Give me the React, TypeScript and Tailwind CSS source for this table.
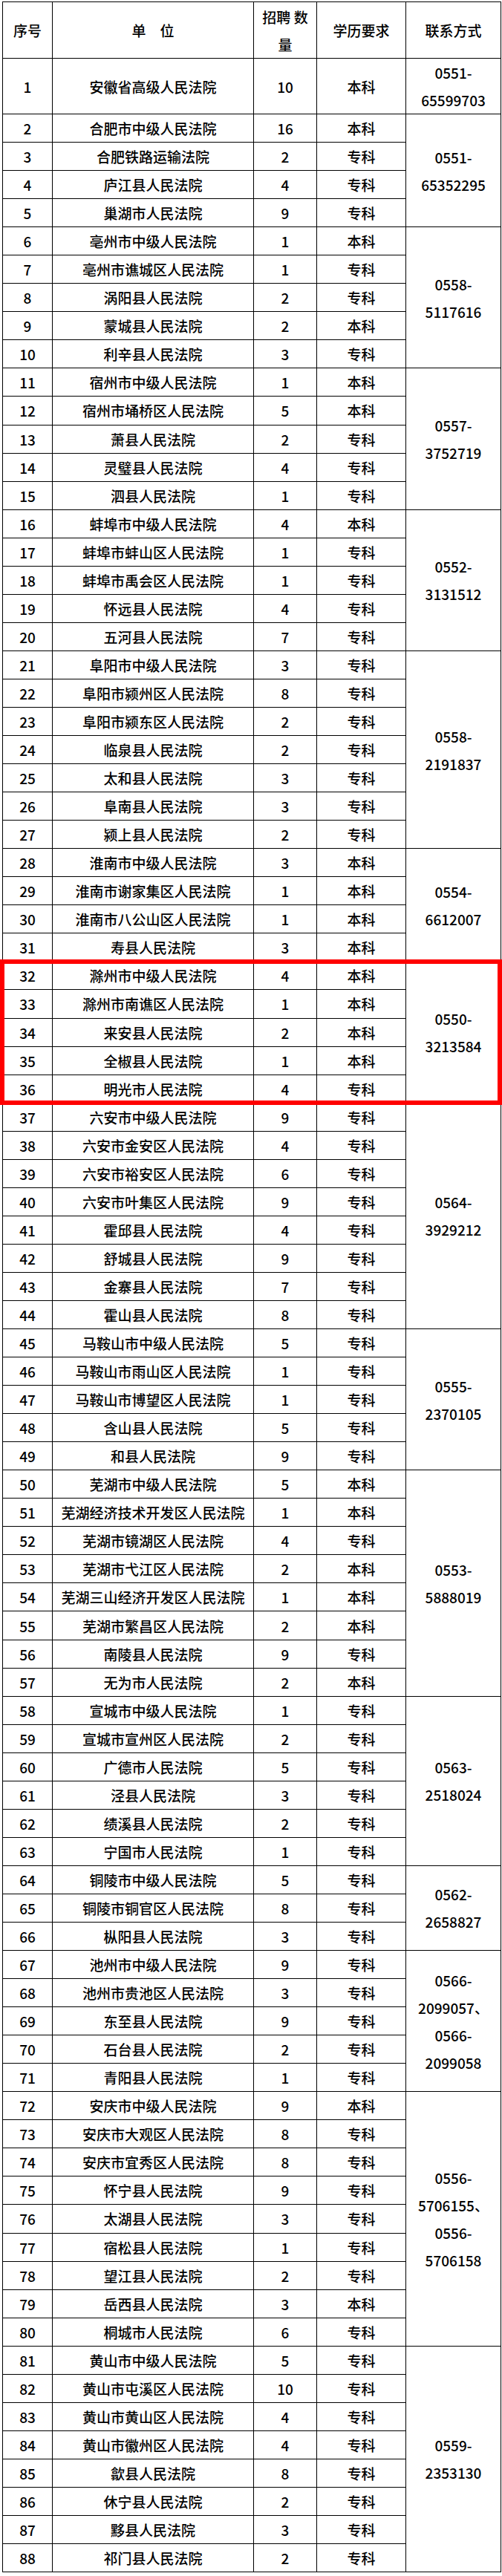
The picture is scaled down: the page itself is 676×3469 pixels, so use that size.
type Row = [number, string, number, string];

const groups: { phone: string; rows: Row[] }[] = [
  { phone: "0551-65599703", rows: [[1, "安徽省高级人民法院", 10, "本科"]] },
  {
    phone: "0551-65352295",
    rows: [
      [2, "合肥市中级人民法院", 16, "本科"],
      [3, "合肥铁路运输法院", 2, "专科"],
      [4, "庐江县人民法院", 4, "专科"],
      [5, "巢湖市人民法院", 9, "专科"],
    ],
  },
  {
    phone: "0558-5117616",
    rows: [
      [6, "亳州市中级人民法院", 1, "本科"],
      [7, "亳州市谯城区人民法院", 1, "专科"],
      [8, "涡阳县人民法院", 2, "专科"],
      [9, "蒙城县人民法院", 2, "本科"],
      [10, "利辛县人民法院", 3, "专科"],
    ],
  },
  {
    phone: "0557-3752719",
    rows: [
      [11, "宿州市中级人民法院", 1, "本科"],
      [12, "宿州市埇桥区人民法院", 5, "本科"],
      [13, "萧县人民法院", 2, "专科"],
      [14, "灵璧县人民法院", 4, "专科"],
      [15, "泗县人民法院", 1, "专科"],
    ],
  },
  {
    phone: "0552-3131512",
    rows: [
      [16, "蚌埠市中级人民法院", 4, "本科"],
      [17, "蚌埠市蚌山区人民法院", 1, "专科"],
      [18, "蚌埠市禹会区人民法院", 1, "专科"],
      [19, "怀远县人民法院", 4, "专科"],
      [20, "五河县人民法院", 7, "专科"],
    ],
  },
  {
    phone: "0558-2191837",
    rows: [
      [21, "阜阳市中级人民法院", 3, "专科"],
      [22, "阜阳市颍州区人民法院", 8, "专科"],
      [23, "阜阳市颍东区人民法院", 2, "专科"],
      [24, "临泉县人民法院", 2, "专科"],
      [25, "太和县人民法院", 3, "专科"],
      [26, "阜南县人民法院", 3, "专科"],
      [27, "颍上县人民法院", 2, "专科"],
    ],
  },
  {
    phone: "0554-6612007",
    rows: [
      [28, "淮南市中级人民法院", 3, "本科"],
      [29, "淮南市谢家集区人民法院", 1, "本科"],
      [30, "淮南市八公山区人民法院", 1, "本科"],
      [31, "寿县人民法院", 3, "本科"],
    ],
  },
  {
    phone: "0550-3213584",
    rows: [
      [32, "滁州市中级人民法院", 4, "本科"],
      [33, "滁州市南谯区人民法院", 1, "本科"],
      [34, "来安县人民法院", 2, "本科"],
      [35, "全椒县人民法院", 1, "本科"],
      [36, "明光市人民法院", 4, "专科"],
    ],
  },
  {
    phone: "0564-3929212",
    rows: [
      [37, "六安市中级人民法院", 9, "专科"],
      [38, "六安市金安区人民法院", 4, "专科"],
      [39, "六安市裕安区人民法院", 6, "专科"],
      [40, "六安市叶集区人民法院", 9, "专科"],
      [41, "霍邱县人民法院", 4, "专科"],
      [42, "舒城县人民法院", 9, "专科"],
      [43, "金寨县人民法院", 7, "专科"],
      [44, "霍山县人民法院", 8, "专科"],
    ],
  },
  {
    phone: "0555-2370105",
    rows: [
      [45, "马鞍山市中级人民法院", 5, "专科"],
      [46, "马鞍山市雨山区人民法院", 1, "专科"],
      [47, "马鞍山市博望区人民法院", 1, "专科"],
      [48, "含山县人民法院", 5, "专科"],
      [49, "和县人民法院", 9, "专科"],
    ],
  },
  {
    phone: "0553-5888019",
    rows: [
      [50, "芜湖市中级人民法院", 5, "本科"],
      [51, "芜湖经济技术开发区人民法院", 1, "本科"],
      [52, "芜湖市镜湖区人民法院", 4, "专科"],
      [53, "芜湖市弋江区人民法院", 2, "本科"],
      [54, "芜湖三山经济开发区人民法院", 1, "本科"],
      [55, "芜湖市繁昌区人民法院", 2, "本科"],
      [56, "南陵县人民法院", 9, "专科"],
      [57, "无为市人民法院", 2, "本科"],
    ],
  },
  {
    phone: "0563-2518024",
    rows: [
      [58, "宣城市中级人民法院", 1, "专科"],
      [59, "宣城市宣州区人民法院", 2, "专科"],
      [60, "广德市人民法院", 5, "专科"],
      [61, "泾县人民法院", 3, "专科"],
      [62, "绩溪县人民法院", 2, "专科"],
      [63, "宁国市人民法院", 1, "专科"],
    ],
  },
  {
    phone: "0562-2658827",
    rows: [
      [64, "铜陵市中级人民法院", 5, "专科"],
      [65, "铜陵市铜官区人民法院", 8, "专科"],
      [66, "枞阳县人民法院", 3, "专科"],
    ],
  },
  {
    phone: "0566-2099057、0566-2099058",
    rows: [
      [67, "池州市中级人民法院", 9, "专科"],
      [68, "池州市贵池区人民法院", 3, "专科"],
      [69, "东至县人民法院", 9, "专科"],
      [70, "石台县人民法院", 2, "专科"],
      [71, "青阳县人民法院", 1, "专科"],
    ],
  },
  {
    phone: "0556-5706155、0556-5706158",
    rows: [
      [72, "安庆市中级人民法院", 9, "本科"],
      [73, "安庆市大观区人民法院", 8, "专科"],
      [74, "安庆市宜秀区人民法院", 8, "专科"],
      [75, "怀宁县人民法院", 9, "专科"],
      [76, "太湖县人民法院", 3, "专科"],
      [77, "宿松县人民法院", 1, "专科"],
      [78, "望江县人民法院", 2, "专科"],
      [79, "岳西县人民法院", 3, "本科"],
      [80, "桐城市人民法院", 6, "专科"],
    ],
  },
  {
    phone: "0559-2353130",
    rows: [
      [81, "黄山市中级人民法院", 5, "专科"],
      [82, "黄山市屯溪区人民法院", 10, "专科"],
      [83, "黄山市黄山区人民法院", 4, "专科"],
      [84, "黄山市徽州区人民法院", 4, "专科"],
      [85, "歙县人民法院", 8, "专科"],
      [86, "休宁县人民法院", 2, "专科"],
      [87, "黟县人民法院", 3, "专科"],
      [88, "祁门县人民法院", 2, "专科"],
    ],
  },
];

const cell = "border border-black p-0 text-center align-middle";

export default function App() {
  return (
    <div
      className="relative w-[676px] bg-white pt-[2px] pb-[3px] text-[19px] font-medium leading-[37px] text-black"
      style={{ fontFamily: '"Noto Sans CJK SC", "Noto Sans", sans-serif' }}
    >
      <table className="ml-[3px] w-[671px] table-fixed border-collapse">
        <colgroup>
          <col className="w-[67px]" />
          <col className="w-[271px]" />
          <col className="w-[85px]" />
          <col className="w-[120px]" />
          <col className="w-[128px]" />
        </colgroup>
        <thead>
          <tr className="h-[76px]">
            <th className={`${cell} font-medium`}>序号</th>
            <th className={`${cell} font-medium`}>单　位</th>
            <th className={`${cell} font-medium`}>
              招聘 数
              <br />量
            </th>
            <th className={`${cell} font-medium`}>学历要求</th>
            <th className={`${cell} font-medium`}>联系方式</th>
          </tr>
        </thead>
        <tbody>
          {groups.map((g) =>
            g.rows.map(([id, name, count, edu], i) => (
              <tr key={id} className={id === 1 ? "h-[75px]" : "h-[38.06px]"}>
                <td className={cell}>{id}</td>
                <td className={cell}>{name}</td>
                <td className={cell}>{count}</td>
                <td className={cell}>{edu}</td>
                {i === 0 && (
                  <td rowSpan={g.rows.length} className={`${cell} px-[4px]`}>
                    {g.phone}
                  </td>
                )}
              </tr>
            ))
          )}
        </tbody>
      </table>

      {/* red highlight around rows 32-36 */}
      <div className="pointer-events-none absolute left-0 top-[1292px] h-[196px] w-[676px] border-[6px] border-[#ff0000]" />
    </div>
  );
}
